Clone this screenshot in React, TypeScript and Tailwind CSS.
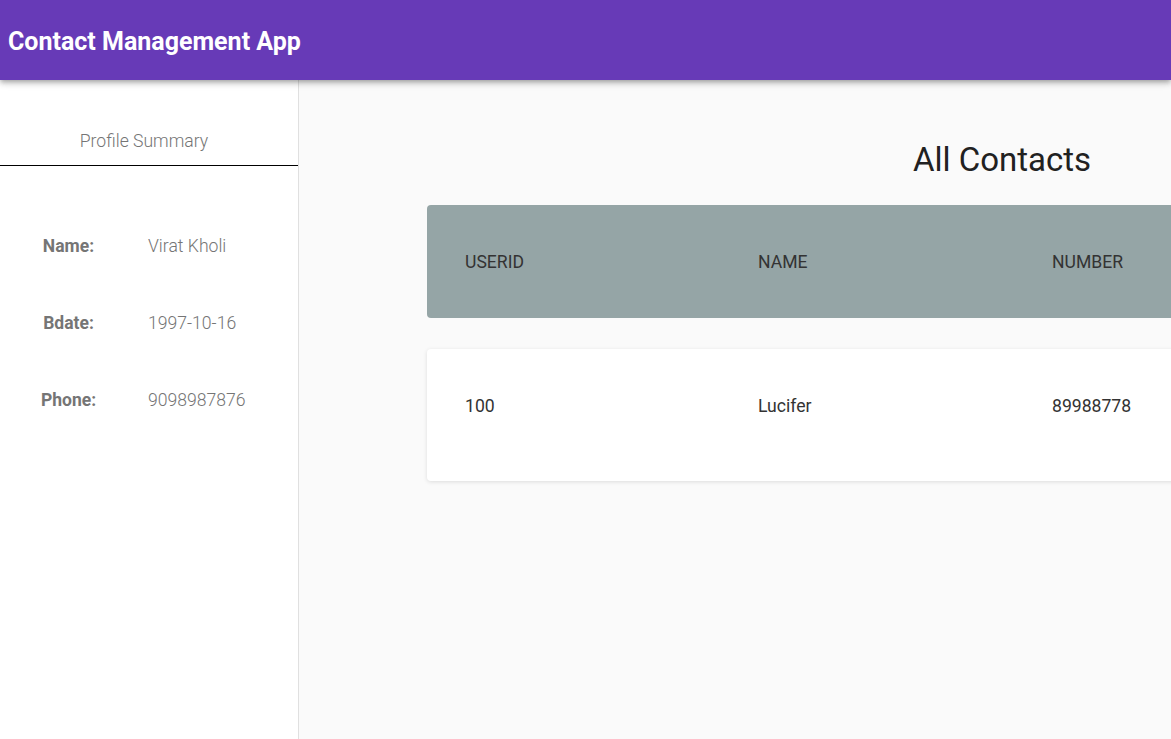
import React from 'react';

const profile = [
  { label: 'Name:', value: 'Virat Kholi' },
  { label: 'Bdate:', value: '1997-10-16' },
  { label: 'Phone:', value: '9098987876' },
];

const contacts = [{ userid: '100', name: 'Lucifer', number: '89988778' }];

export default function App() {
  return (
    <div className="w-[1171px] h-[739px] overflow-hidden flex flex-col bg-[#fafafa] font-['Roboto',sans-serif]">
      {/* App bar */}
      <header className="relative z-10 h-[80px] flex-shrink-0 flex items-center pl-[8px] bg-[#673ab7] shadow-[0_2px_4px_-1px_rgba(0,0,0,0.2),0_4px_5px_0_rgba(0,0,0,0.14),0_1px_10px_0_rgba(0,0,0,0.12)]">
        <h1 className="text-[25px] font-bold text-white leading-none pt-[2px]">Contact Management App</h1>
      </header>

      <div className="flex flex-1 min-h-0">
        {/* Sidebar */}
        <aside className="w-[299px] flex-shrink-0 bg-white border-r border-[#e0e0e0]">
          <div className="pt-[49px] pb-[12px] pr-[10px] border-b border-black text-center text-[17.6px] leading-[24px] font-light text-[#757575]">
            Profile Summary
          </div>
          <div className="mt-[68px] flex flex-col gap-[53px]">
            {profile.map((p) => (
              <div key={p.label} className="grid grid-cols-[137px_1fr] leading-[24px]">
                <span className="text-center text-[17.5px] font-bold text-[#757575]">{p.label}</span>
                <span className="pl-[11px] text-[17.6px] font-light text-[#757575]">{p.value}</span>
              </div>
            ))}
          </div>
        </aside>

        {/* Main */}
        <main className="flex-1 min-w-0 overflow-hidden">
          <div className="ml-[128px] w-[1150px] pt-[60px]">
            <h2 className="text-center text-[33px] leading-[40px] text-[#212121]">All Contacts</h2>
            <div className="mt-[25px] h-[113px] rounded-[4px] bg-[#95a5a6] flex items-center pl-[38px] pt-[2px] text-[17.6px] text-[#333333] uppercase">
              <span className="w-[293px]">Userid</span>
              <span className="w-[294px]">Name</span>
              <span className="w-[294px]">Number</span>
            </div>
            {contacts.map((c) => (
              <div key={c.userid} className="mt-[31px] h-[132px] rounded-[4px] bg-white shadow-[0_1px_4px_rgba(0,0,0,0.12)] flex items-start pt-[45px] pl-[38px] leading-[24px] text-[17.6px] text-[#333333]">
                <span className="w-[293px]">{c.userid}</span>
                <span className="w-[294px]">{c.name}</span>
                <span className="w-[294px]">{c.number}</span>
              </div>
            ))}
          </div>
        </main>
      </div>
    </div>
  );
}
